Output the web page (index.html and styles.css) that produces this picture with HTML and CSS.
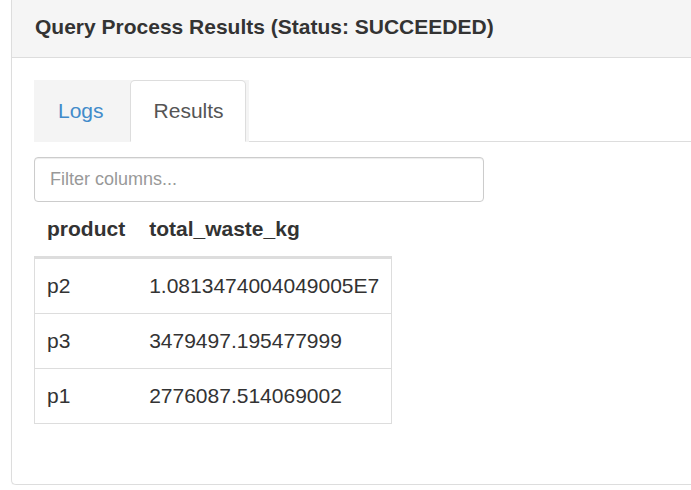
FILE: index.html
```html
<!DOCTYPE html>
<html>
<head>
<meta charset="utf-8">
<link rel="stylesheet" href="styles.css">
</head>
<body>
<div class="page">
  <div class="panel">
    <div class="panel-heading">Query Process Results (Status: SUCCEEDED)</div>
    <div class="panel-body">
      <ul class="tabs">
        <li class="tab"><a class="tab-link">Logs</a></li>
        <li class="tab"><a class="tab-link active">Results</a></li>
      </ul>
      <input class="filter" type="text" placeholder="Filter columns...">
      <table class="results">
        <thead>
          <tr><th>product</th><th>total_waste_kg</th></tr>
        </thead>
        <tbody>
          <tr><td>p2</td><td>1.0813474004049005E7</td></tr>
          <tr><td>p3</td><td>3479497.195477999</td></tr>
          <tr><td>p1</td><td>2776087.514069002</td></tr>
        </tbody>
      </table>
    </div>
  </div>
</div>
</body>
</html>
```

FILE: styles.css
```css
html, body {
  margin: 0;
  padding: 0;
  background: #fff;
}
body {
  font-family: "Liberation Sans", Arial, sans-serif;
  color: #333;
  overflow: hidden;
}
.page {
  padding-left: 11px;
}
.panel {
  border-left: 1px solid #ddd;
  border-bottom: 1px solid #ddd;
  border-radius: 0 0 0 5px;
  background: #fff;
  box-shadow: 0 1px 1px rgba(0,0,0,0.05);
}
.panel-heading {
  background: #f5f5f5;
  border-bottom: 1px solid #ddd;
  padding: 12px 22px 15px 23px;
  font-size: 21px;
  line-height: 30px;
  font-weight: bold;
  color: #333;
}
.panel-body {
  padding: 22px 0 23px 22px;
}
.tabs {
  list-style: none;
  margin: 0;
  padding: 0;
  display: flex;
  border-bottom: 1px solid #ddd;
}
.tab {
  background: #f4f4f4;
  margin-bottom: -1px;
}
.tab-link {
  display: block;
  margin-right: 3px;
  padding: 15px 22px 15px 23px;
  font-size: 21px;
  line-height: 30px;
  color: #428bca;
  border: 1px solid transparent;
  border-radius: 5px 5px 0 0;
}
.tab-link.active {
  background: #fff;
  color: #555;
  border-color: #ddd;
  border-bottom-color: transparent;
  padding-right: 21px;
}
.filter {
  display: block;
  box-sizing: border-box;
  margin-top: 15px;
  width: 450px;
  height: 45px;
  padding: 7px 15px;
  font-family: "Liberation Sans", Arial, sans-serif;
  font-size: 18px;
  color: #555;
  border: 1px solid #ccc;
  border-radius: 4px;
  box-shadow: inset 0 1px 1px rgba(0,0,0,0.075);
  outline: none;
}
.filter::placeholder {
  color: #999;
}
.results {
  border-collapse: separate;
  border-spacing: 0;
  margin-bottom: 37px;
  font-size: 21px;
  line-height: 30px;
}
.results th {
  text-align: left;
  font-weight: bold;
  padding: 12px;
  border-bottom: 3px solid #ddd;
  white-space: nowrap;
}
.results td {
  padding: 12px;
  border-bottom: 1px solid #ddd;
  white-space: nowrap;
}
.results td:first-child {
  border-left: 1px solid #ddd;
  padding-left: 12px;
}
.results td:last-child {
  border-right: 1px solid #ddd;
}
.results th:first-child {
  padding-left: 13px;
}
```
